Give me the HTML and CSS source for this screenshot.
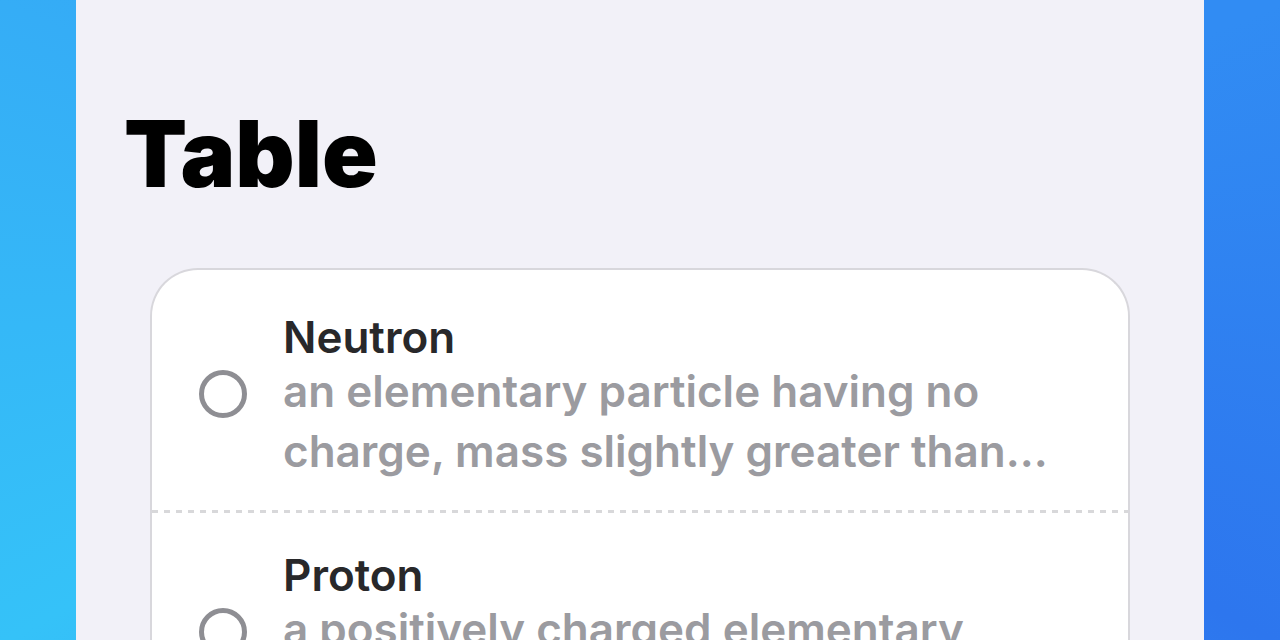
FILE: index.html
```html
<!DOCTYPE html>
<html lang="en">
<head>
<meta charset="utf-8">
<meta name="viewport" content="width=device-width, initial-scale=1">
<title>Table</title>
<link rel="stylesheet" href="styles.css">
</head>
<body>
<main class="screen">
  <h1 class="title">Table</h1>
  <ul class="list">
    <li class="row">
      <input class="radio" type="radio" name="particle" id="neutron">
      <label class="label" for="neutron">
        <span class="name">Neutron</span>
        <span class="detail">an elementary particle having no charge, mass slightly greater than...</span>
      </label>
    </li>
    <li class="row">
      <input class="radio" type="radio" name="particle" id="proton">
      <label class="label" for="proton">
        <span class="name">Proton</span>
        <span class="detail">a positively charged elementary</span>
      </label>
    </li>
  </ul>
</main>
</body>
</html>
```
FILE: styles.css
```css
* {
  box-sizing: border-box;
}

body {
  margin: 0;
  height: 100vh;
  overflow: hidden;
  padding: 0 76px;
  font-family: Inter, "Liberation Sans", sans-serif;
  background: conic-gradient(at 50% 43%, #318cf3 67deg, #2d76ee 120deg, #35c2f8 240deg, #35adf6 293deg, #318cf3);
}

.screen {
  min-height: 100%;
  padding: 104px 74px 0;
  background: #f2f1f8;
}

.title {
  margin: 0 0 64px -26px;
  font-size: 92px;
  line-height: 100px;
  font-weight: 900;
  color: #000;
}

.list {
  margin: 0;
  padding: 5px 0 0;
  list-style: none;
  background: #fff;
  border: 2px solid #d8d7dc;
  border-bottom: 0;
  border-radius: 48px 48px 0 0;
}

.row {
  display: flex;
  align-items: center;
  gap: 36px;
  padding: 38px 48px 29px 47px;
}

/* Dashed divider with even 6px dashes */
.row + .row {
  padding-top: 41px;
  background: repeating-linear-gradient(90deg, #d8d8da 0 6px, transparent 6px 12px) top / 100% 3px no-repeat;
}

.radio {
  appearance: none;
  flex: none;
  width: 48px;
  height: 48px;
  margin: 0 0 6px;
  border: 5px solid #8e8e93;
  border-radius: 50%;
}

.label {
  flex: 1;
  font-size: 44px;
  font-weight: 600;
}

.name,
.detail {
  display: block;
}

.name {
  line-height: 48px;
  color: #28282a;
}

.detail {
  min-height: 120px;
  line-height: 60px;
  color: #9b9ba0;
}
```
